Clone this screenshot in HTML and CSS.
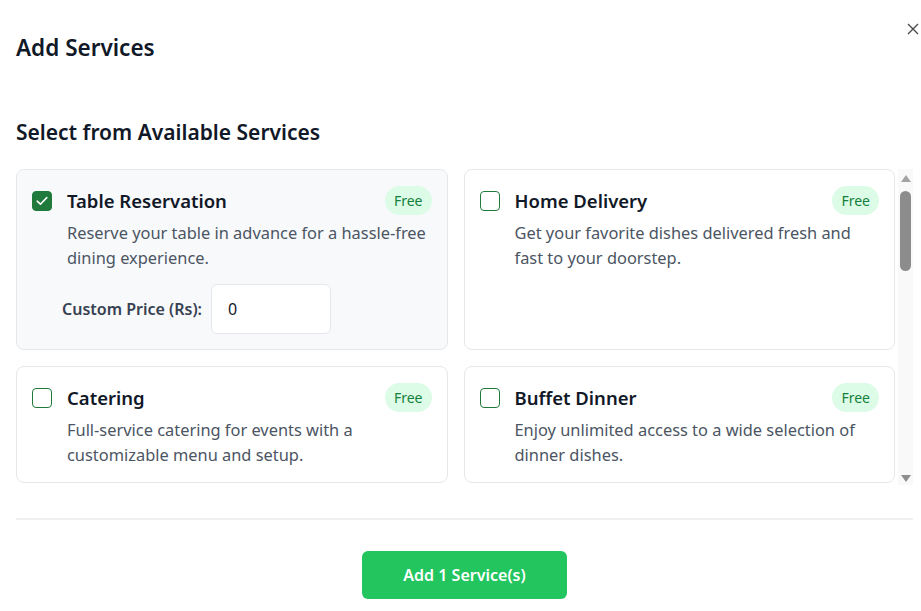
FILE: index.html
```html
<!DOCTYPE html>
<html lang="en">
<head>
<meta charset="utf-8">
<title>Add Services</title>
<link rel="stylesheet" href="styles.css">
</head>
<body>
<div class="modal">
  <button class="close" aria-label="Close">
    <svg width="12" height="12" viewBox="0 0 12 12"><path d="M1 1L11 11M11 1L1 11" stroke="#4b4b4b" stroke-width="1.4" fill="none"/></svg>
  </button>
  <header class="modal-header">
    <h2 class="modal-title">Add Services</h2>
  </header>
  <h3 class="section-title">Select from Available Services</h3>
  <div class="services-wrap">
    <div class="services-scroll">
      <div class="services-grid">
        <div class="card selected">
          <div class="card-top">
            <span class="check checked"><svg width="12" height="10" viewBox="0 0 12 10"><path d="M1.2 5.2L4.4 8.2L10.8 1.6" stroke="#fff" stroke-width="1.6" fill="none" stroke-linecap="round" stroke-linejoin="round"/></svg></span>
            <span class="card-title">Table Reservation</span>
            <span class="badge">Free</span>
          </div>
          <p class="card-desc">Reserve your table in advance for a hassle-free dining experience.</p>
          <div class="price-row">
            <label class="price-label">Custom Price (Rs):</label>
            <input class="price-input" type="text" value="0">
          </div>
        </div>
        <div class="card">
          <div class="card-top">
            <span class="check"></span>
            <span class="card-title">Home Delivery</span>
            <span class="badge">Free</span>
          </div>
          <p class="card-desc">Get your favorite dishes delivered fresh and fast to your doorstep.</p>
        </div>
        <div class="card">
          <div class="card-top">
            <span class="check"></span>
            <span class="card-title">Catering</span>
            <span class="badge">Free</span>
          </div>
          <p class="card-desc">Full-service catering for events with a customizable menu and setup.</p>
        </div>
        <div class="card">
          <div class="card-top">
            <span class="check"></span>
            <span class="card-title">Buffet Dinner</span>
            <span class="badge">Free</span>
          </div>
          <p class="card-desc">Enjoy unlimited access to a wide selection of dinner dishes.</p>
        </div>
      </div>
    </div>
    <div class="scrollbar" aria-hidden="true">
      <span class="sb-arrow sb-up"></span>
      <span class="sb-thumb"></span>
      <span class="sb-space"></span>
      <span class="sb-arrow sb-down"></span>
    </div>
  </div>
  <footer class="modal-footer">
    <button class="add-btn">Add 1 Service(s)</button>
  </footer>
</div>
</body>
</html>
```

FILE: styles.css
```css
* { box-sizing: border-box; }
html, body { margin: 0; padding: 0; background: #fff; }
body {
  font-family: "Noto Sans", "Open Sans", sans-serif;
  color: #111827;
  overflow: hidden;
}
.modal {
  position: relative;
  padding: 0 8px 0 16px;
  width: 921px;
  height: 611px;
}
.close {
  position: absolute;
  top: 23px;
  right: 2px;
  width: 12px;
  height: 12px;
  padding: 0;
  border: 0;
  background: none;
  display: flex;
}
.modal-header { padding-top: 33px; }
.modal-title {
  margin: 0;
  font-size: 22.5px;
  line-height: 30px;
  font-weight: 600;
  color: #111827;
}
.section-title {
  margin: 55px 0 0;
  font-size: 21px;
  line-height: 28px;
  font-weight: 600;
  color: #111827;
}
.services-wrap {
  margin-top: 23px;
  height: 316px;
  display: flex;
}
.services-scroll {
  flex: 1;
  overflow: hidden;
  padding-right: 3px;
}
.scrollbar {
  width: 15px;
  flex: none;
  background: #f9f9f9;
  display: flex;
  flex-direction: column;
  align-items: center;
}
.sb-arrow {
  width: 0;
  height: 0;
  border-left: 5.5px solid transparent;
  border-right: 5.5px solid transparent;
}
.sb-up {
  margin-top: 6px;
  border-bottom: 7px solid #a3a3a3;
}
.sb-down {
  margin-bottom: 3px;
  border-top: 7px solid #8f8f8f;
}
.sb-thumb {
  margin-top: 9px;
  width: 11px;
  height: 80px;
  border-radius: 6px;
  background: #8c8c8c;
}
.sb-space { flex: 1; }
.services-grid {
  display: grid;
  grid-template-columns: 1fr 1fr;
  gap: 16px;
}
.card {
  border: 1px solid #e5e7eb;
  border-radius: 8px;
  padding: 16px 15px 15px 15px;
  background: #fff;
}
.card.selected { background: #f8f9fb; }
.card-top {
  display: flex;
  align-items: center;
  gap: 15px;
}
.check {
  width: 20px;
  height: 20px;
  border: 1.5px solid #1f7a3c;
  border-radius: 4px;
  background: #fff;
  flex: none;
  display: flex;
  align-items: center;
  justify-content: center;
}
.check.checked { background: #1f7a3c; border-color: #1f7a3c; }
.card-title {
  flex: 1;
  font-size: 18.5px;
  font-weight: 600;
  color: #111827;
}
.badge {
  background: #dcfce7;
  color: #15803d;
  font-size: 14px;
  line-height: 21px;
  padding: 4px 9px;
  border-radius: 999px;
}
.card-desc {
  margin: 5px 0 0 35px;
  font-size: 16.4px;
  line-height: 25px;
  color: #4b5563;
}
.price-row {
  display: flex;
  align-items: center;
  gap: 9px;
  margin: 14px 0 0 30px;
}
.price-label {
  font-size: 16px;
  font-weight: 600;
  color: #374151;
}
.price-input {
  width: 120px;
  height: 50px;
  border: 1px solid #e5e7eb;
  border-radius: 6px;
  background: #fff;
  padding: 0 16px;
  font-family: inherit;
  font-size: 16px;
  color: #111827;
}
.modal-footer {
  margin-top: 33px;
  border-top: 2px solid #f0f0f0;
  padding-top: 31px;
  display: flex;
  justify-content: center;
}
.add-btn {
  width: 205px;
  height: 48px;
  border: 0;
  border-radius: 6px;
  background: #22c55e;
  color: #fff;
  font-family: inherit;
  font-size: 16px;
  font-weight: 600;
}
```
